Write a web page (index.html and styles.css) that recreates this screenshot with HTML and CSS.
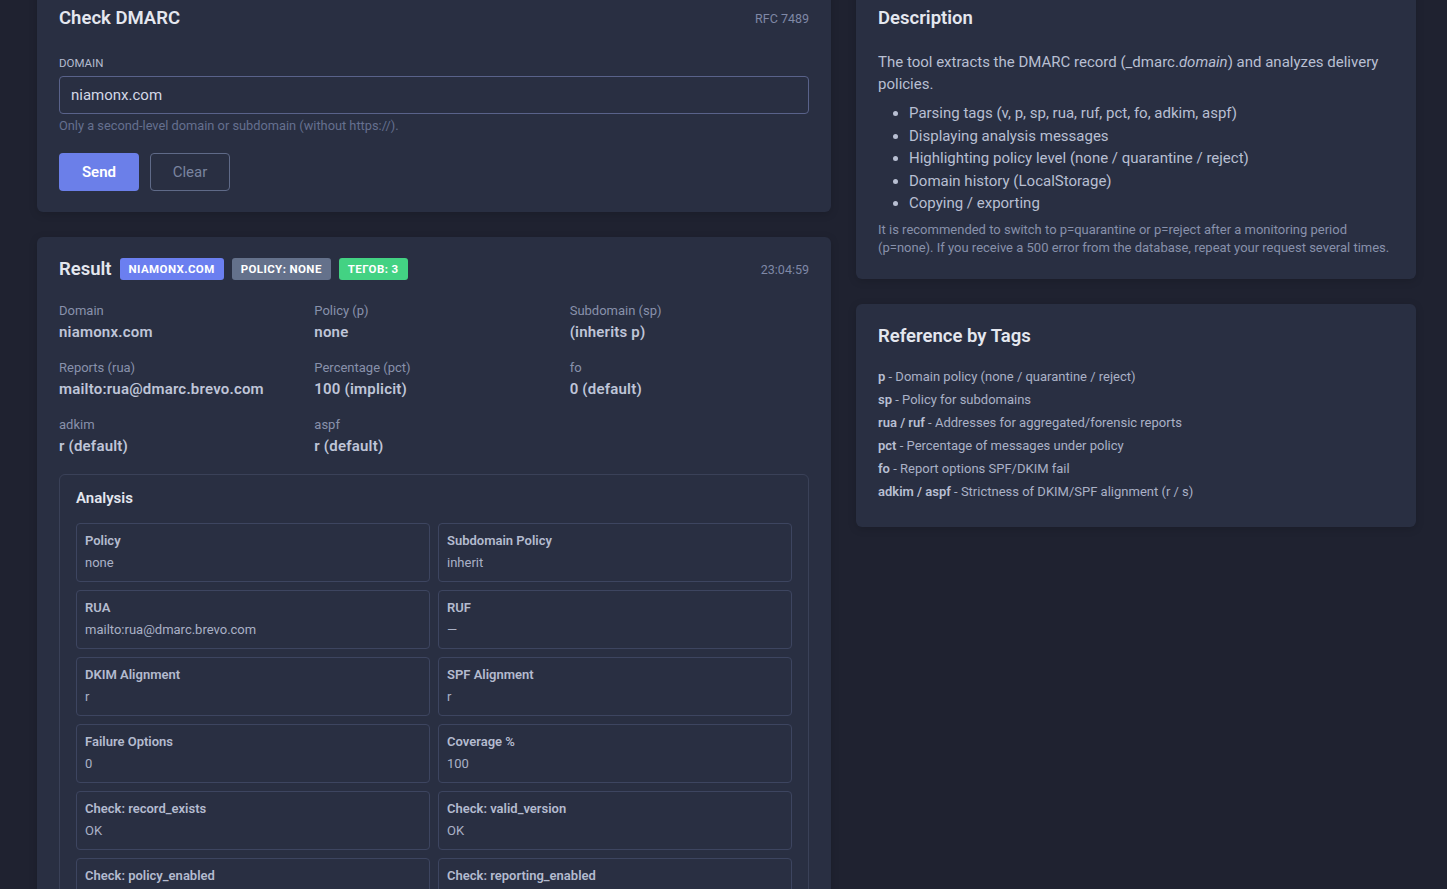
FILE: index.html
```html
<!DOCTYPE html>
<html lang="en">
<head>
    <meta charset="UTF-8" />
    <meta name="viewport" content="width=device-width, initial-scale=1" />
    <title>Check DMARC</title>
    <link rel="stylesheet" href="styles.css">
</head>
<body>
    <div class="layout">
        <div class="col">
            <section class="card">
                <div class="card-head">
                    <h2>Check DMARC</h2>
                    <span class="muted">RFC 7489</span>
                </div>
                <form id="dmarcForm">
                    <label class="field-label" for="domain">DOMAIN</label>
                    <input id="domain" class="field-input" type="text" value="niamonx.com" />
                    <div class="hint">Only a second-level domain or subdomain (without https://).</div>
                    <div class="actions">
                        <button type="submit" class="btn btn-primary">Send</button>
                        <button type="button" class="btn btn-outline">Clear</button>
                    </div>
                </form>
            </section>

            <section class="card">
                <div class="card-head">
                    <div class="result-title">
                        <h2>Result</h2>
                        <span class="badge badge-blue">NIAMONX.COM</span>
                        <span class="badge badge-gray">POLICY: NONE</span>
                        <span class="badge badge-green">ТЕГОВ: 3</span>
                    </div>
                    <span class="muted">23:04:59</span>
                </div>

                <div class="summary">
                    <div class="item"><div class="item-label">Domain</div><div class="item-value">niamonx.com</div></div>
                    <div class="item"><div class="item-label">Policy (p)</div><div class="item-value">none</div></div>
                    <div class="item"><div class="item-label">Subdomain (sp)</div><div class="item-value">(inherits p)</div></div>
                    <div class="item"><div class="item-label">Reports (rua)</div><div class="item-value">mailto:rua@dmarc.brevo.com</div></div>
                    <div class="item"><div class="item-label">Percentage (pct)</div><div class="item-value">100 (implicit)</div></div>
                    <div class="item"><div class="item-label">fo</div><div class="item-value">0 (default)</div></div>
                    <div class="item"><div class="item-label">adkim</div><div class="item-value">r (default)</div></div>
                    <div class="item"><div class="item-label">aspf</div><div class="item-value">r (default)</div></div>
                </div>

                <div class="analysis">
                    <h3>Analysis</h3>
                    <div class="analysis-grid">
                        <div class="cell"><div class="cell-label">Policy</div><div class="cell-value">none</div></div>
                        <div class="cell"><div class="cell-label">Subdomain Policy</div><div class="cell-value">inherit</div></div>
                        <div class="cell"><div class="cell-label">RUA</div><div class="cell-value">mailto:rua@dmarc.brevo.com</div></div>
                        <div class="cell"><div class="cell-label">RUF</div><div class="cell-value">—</div></div>
                        <div class="cell"><div class="cell-label">DKIM Alignment</div><div class="cell-value">r</div></div>
                        <div class="cell"><div class="cell-label">SPF Alignment</div><div class="cell-value">r</div></div>
                        <div class="cell"><div class="cell-label">Failure Options</div><div class="cell-value">0</div></div>
                        <div class="cell"><div class="cell-label">Coverage %</div><div class="cell-value">100</div></div>
                        <div class="cell"><div class="cell-label">Check: record_exists</div><div class="cell-value">OK</div></div>
                        <div class="cell"><div class="cell-label">Check: valid_version</div><div class="cell-value">OK</div></div>
                        <div class="cell"><div class="cell-label">Check: policy_enabled</div><div class="cell-value">OK</div></div>
                        <div class="cell"><div class="cell-label">Check: reporting_enabled</div><div class="cell-value">OK</div></div>
                    </div>
                </div>
            </section>
        </div>

        <div class="col">
            <section class="card">
                <h2>Description</h2>
                <p class="desc">The tool extracts the DMARC record (_dmarc.<em>domain</em>) and analyzes delivery policies.</p>
                <ul class="desc-list">
                    <li>Parsing tags (v, p, sp, rua, ruf, pct, fo, adkim, aspf)</li>
                    <li>Displaying analysis messages</li>
                    <li>Highlighting policy level (none / quarantine / reject)</li>
                    <li>Domain history (LocalStorage)</li>
                    <li>Copying / exporting</li>
                </ul>
                <p class="note">It is recommended to switch to p=quarantine or p=reject after a monitoring period (p=none). If you receive a 500 error from the database, repeat your request several times.</p>
            </section>

            <section class="card">
                <h2>Reference by Tags</h2>
                <div class="tags">
                    <div><b>p</b> - Domain policy (none / quarantine / reject)</div>
                    <div><b>sp</b> - Policy for subdomains</div>
                    <div><b>rua / ruf</b> - Addresses for aggregated/forensic reports</div>
                    <div><b>pct</b> - Percentage of messages under policy</div>
                    <div><b>fo</b> - Report options SPF/DKIM fail</div>
                    <div><b>adkim / aspf</b> - Strictness of DKIM/SPF alignment (r / s)</div>
                </div>
            </section>
        </div>
    </div>
    <script>
        document.getElementById('dmarcForm').addEventListener('submit', function(e) {
            e.preventDefault();
        });
    </script>
</body>
</html>
```

FILE: styles.css
```css
/* Dasar */
* {
    box-sizing: border-box;
}
body {
    margin: 0;
    background: #1f2230;
    color: #c3c9dc;
    font-family: Roboto, 'Open Sans', Arial, sans-serif;
    overflow: hidden;
}
.layout {
    display: grid;
    grid-template-columns: 794px 560px;
    gap: 25px;
    padding-left: 37px;
    margin-top: -14px;
    align-items: start;
}
.col {
    display: flex;
    flex-direction: column;
    gap: 25px;
}
.card {
    background: #292f42;
    border-radius: 6px;
    padding: 20px 22px 21px;
    box-shadow: 0 2px 8px rgba(0,0,0,0.15);
}
.card h2 {
    margin: 0;
    font-size: 18.5px;
    line-height: 24px;
    font-weight: 600;
    color: #e4e7ef;
}
.card-head {
    display: flex;
    justify-content: space-between;
    align-items: center;
}
.muted {
    font-size: 12.5px;
    color: #7f88a6;
}

/* Form */
.field-label {
    display: block;
    margin-top: 26px;
    font-size: 11.5px;
    line-height: 14px;
    color: #b4bbcf;
}
.field-input {
    display: block;
    width: 100%;
    height: 38px;
    margin-top: 6px;
    padding: 0 11px;
    background: transparent;
    border: 1px solid #59628a;
    border-radius: 4px;
    color: #d3d8e6;
    font-family: inherit;
    font-size: 15px;
}
.hint {
    margin-top: 4px;
    font-size: 12.8px;
    line-height: 16px;
    color: #65708f;
}
.actions {
    display: flex;
    gap: 11px;
    margin-top: 19px;
}
.btn {
    height: 38px;
    width: 80px;
    border-radius: 4px;
    font-family: inherit;
    font-size: 15px;
    cursor: pointer;
}
.btn-primary {
    background: #6b7fe9;
    border: none;
    color: #fff;
    font-weight: 600;
}
.btn-outline {
    background: transparent;
    border: 1px solid #5f6a88;
    color: #7a849f;
}

/* Hasil */
.result-title {
    display: flex;
    align-items: center;
    gap: 8px;
}
.badge {
    display: inline-block;
    height: 22px;
    line-height: 22px;
    padding: 0 9px;
    border-radius: 3px;
    color: #fff;
    font-size: 11.5px;
    font-weight: 700;
    letter-spacing: 0.4px;
}
.badge-blue {
    background: #6b7ff0;
}
.badge-gray {
    background: #64718b;
}
.badge-green {
    background: #43d283;
}
.summary {
    display: grid;
    grid-template-columns: repeat(3, 1fr);
    column-gap: 16px;
    row-gap: 17px;
    margin-top: 21px;
}
.item-label {
    font-size: 13px;
    line-height: 18px;
    color: #8891ab;
}
.item-value {
    margin-top: 2px;
    font-size: 15px;
    line-height: 20px;
    font-weight: 600;
    letter-spacing: 0.2px;
    color: #bfc5d8;
}

/* Analisis */
.analysis {
    margin-top: 18px;
    border: 1px solid #3a4158;
    border-radius: 6px;
    padding: 13px 16px 16px;
}
.analysis h3 {
    margin: 0;
    font-size: 15px;
    line-height: 20px;
    font-weight: 600;
    color: #e4e7ef;
}
.analysis-grid {
    display: grid;
    grid-template-columns: 1fr 1fr;
    gap: 8px;
    margin-top: 15px;
}
.cell {
    border: 1px solid #3d4560;
    border-radius: 4px;
    padding: 8px 8px 9px;
}
.cell-label {
    font-size: 13px;
    line-height: 18px;
    font-weight: 600;
    color: #b4bbcf;
}
.cell-value {
    margin-top: 4px;
    font-size: 13px;
    line-height: 18px;
    color: #aab1c6;
}

/* Deskripsi */
.desc {
    margin: 21px 0 0;
    font-size: 15px;
    line-height: 22px;
    color: #b8bfd2;
}
.desc-list {
    margin: 7px 0 0;
    padding-left: 31px;
    font-size: 15px;
    line-height: 22.5px;
    color: #b8bfd2;
}
.note {
    margin: 6px 0 0;
    font-size: 13px;
    line-height: 18.5px;
    color: #8891ab;
}
.tags {
    margin-top: 17px;
    margin-bottom: 3px;
    font-size: 13px;
    line-height: 23px;
    color: #aab1c6;
}
.tags b {
    font-weight: 600;
    color: #b8bfd2;
}
```
